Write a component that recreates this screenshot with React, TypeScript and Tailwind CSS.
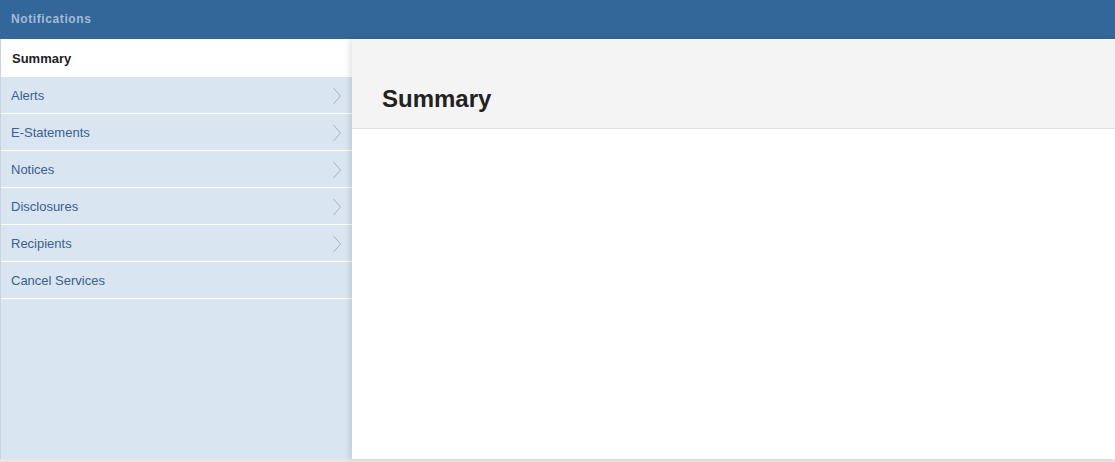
const ITEMS = [
  { label: 'Alerts', arrow: true },
  { label: 'E-Statements', arrow: true },
  { label: 'Notices', arrow: true },
  { label: 'Disclosures', arrow: true },
  { label: 'Recipients', arrow: true },
  { label: 'Cancel Services', arrow: false },
]

function Chevron() {
  return (
    <svg width="10" height="18" viewBox="0 0 10 18" className="shrink-0">
      <polyline points="1.5,1 8.5,9 1.5,17" fill="none" stroke="#aab3bf" strokeWidth="1" />
    </svg>
  )
}

export default function App() {
  return (
    <div className="h-[462px] w-[1115px] overflow-hidden bg-[#e6e6e6] font-['Liberation_Sans',Arial,sans-serif]">
      <div className="flex h-[39px] items-center bg-[#336699] pb-[2px] pl-[11px]">
        <span className="text-[12px] font-bold tracking-[0.6px] text-[#a3bbd6]">Notifications</span>
      </div>

      <div className="flex h-[420px]">
        <aside className="w-[352px] shrink-0 border-l border-[#c9d4e0] bg-[#d9e5f0]">
          <div className="flex h-[38px] items-center bg-white pl-[11px] pt-[1px] text-[13px] font-bold text-[#222]">
            Summary
          </div>
          {ITEMS.map((item) => (
            <div
              key={item.label}
              className="flex h-[37px] items-center justify-between border-b border-white pl-[10px] pr-[10px] pt-[1px] text-[13px] text-[#3c5f8e]"
            >
              <span>{item.label}</span>
              {item.arrow && <Chevron />}
            </div>
          ))}
        </aside>

        <main className="relative z-10 flex-1 bg-white shadow-[-3px_0_5px_rgba(0,0,0,0.10)]">
          <div className="mt-px flex h-[89px] items-center border-b border-[#e2e2e2] bg-[#f4f4f4] pl-[30px] pt-[29px]">
            <h1 className="text-[24px] font-bold text-[#222]">Summary</h1>
          </div>
        </main>
      </div>
    </div>
  )
}
